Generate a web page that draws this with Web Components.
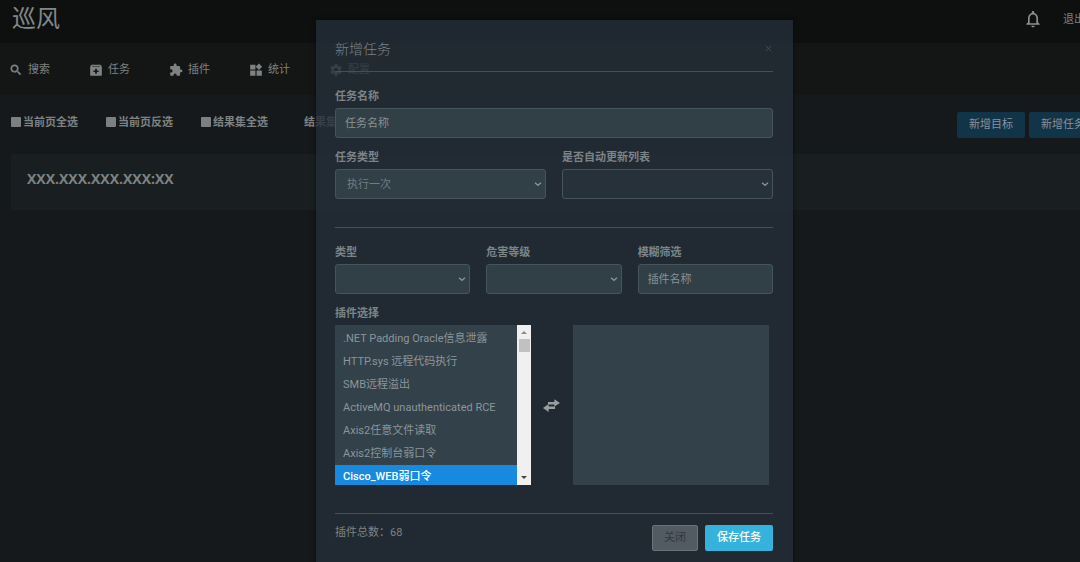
<!DOCTYPE html>
<html lang="zh-CN">
<head>
<meta charset="utf-8">
<title>巡风</title>
<style>
html,body{margin:0;height:100%;overflow:hidden;background:#15191b}
body{font:11px/16px Roboto,"Noto Sans CJK SC",sans-serif;color:#7e8283}
</style>
</head>
<body>
<xf-app></xf-app>
<script>
const icons = {
  search:'<path d="M15.5 14h-.79l-.28-.27A6.47 6.47 0 0 0 16 9.5 6.5 6.5 0 1 0 9.5 16c1.61 0 3.09-.59 4.23-1.57l.27.28v.79l5 4.99L20.49 19zm-6 0C7.01 14 5 11.99 5 9.5S7.01 5 9.5 5 14 7.01 14 9.5 11.99 14 9.5 14z" stroke="currentColor"/>',
  task:'<path fill-rule="evenodd" d="M4 3h16l2 3v14a2 2 0 0 1-2 2H4a2 2 0 0 1-2-2V6zm1 2v1h14V5zm5.500 5v3H7.500v2.500h3v3h3v-3h3V13h-3v-3z"/>',
  plugin:'<path d="M20.500 11H19V7c0-1.100-.9-2-2-2h-4V3.500a2.500 2.500 0 0 0-5 0V5H4c-1.100 0-2 .9-2 2v3.800h1.500a2.700 2.700 0 0 1 0 5.400H2V20c0 1.100.9 2 2 2h3.800v-1.500a2.700 2.700 0 0 1 5.400 0V22H17c1.100 0 2-.9 2-2v-4h1.500a2.500 2.500 0 0 0 0-5z"/>',
  stats:'<path d="M2 3h9v8H2zm0 10h9v9H2zm11 0h9v9h-9zM17 1l5.500 5.500L17 12l-5.500-5.500z"/>',
  gear:'<path d="M19.430 12.980c.04-.32.070-.64.070-.98s-.03-.66-.07-.98l2.110-1.650c.19-.15.240-.42.120-.64l-2-3.460c-.12-.22-.39-.3-.61-.22l-2.490 1c-.52-.4-1.080-.73-1.690-.98l-.38-2.650A.49.490 0 0 0 14 2h-4c-.25 0-.46.180-.49.420l-.38 2.650c-.61.250-1.170.590-1.690.980l-2.490-1c-.23-.09-.49 0-.61.220l-2 3.460c-.13.220-.07.490.120.640l2.110 1.650c-.04.320-.07.650-.07.980s.03.660.070.980l-2.110 1.650c-.19.150-.24.420-.12.640l2 3.460c.12.220.390.3.610.220l2.490-1c.52.4 1.080.730 1.690.980l.38 2.650c.03.240.240.420.490.420h4c.25 0 .46-.18.490-.42l.38-2.650c.61-.25 1.170-.59 1.690-.98l2.490 1c.23.090.490 0 .61-.22l2-3.460c.12-.22.070-.49-.12-.64zM12 15.500a3.500 3.500 0 1 1 0-7 3.500 3.500 0 0 1 0 7z"/>',
  bell:'<path d="M12 22c1.100 0 2-.9 2-2h-4c0 1.100.9 2 2 2zm6-6v-5c0-3.070-1.630-5.640-4.500-6.320V4a1.500 1.500 0 0 0-3 0v.68C7.640 5.360 6 7.920 6 11v5l-2 2v1h16v-1zm-2 1H8v-6c0-2.480 1.510-4.500 4-4.500s4 2.020 4 4.500z"/>',
  swap:'<path d="M16 3l8 5.500-8 5V10.500H7V7h9zM8 10l-8 5.500L8 21v-4h9v-3.500H8z"/>',
  down:'<path d="M3 8l9 8 9-8" fill="none" stroke="currentColor" stroke-width="4"/>',
  close:'<path d="M5 5l14 14M19 5L5 19" fill="none" stroke="currentColor" stroke-width="2"/>'
};

function define(name, html){
  customElements.define(name, class extends HTMLElement{
    constructor(){
      super();
      const t = document.createElement('template');
      t.innerHTML = typeof html === 'function' ? html(this) : html;
      this.attachShadow({mode:'open'}).append(t.content.cloneNode(true));
    }
  });
}

define('xf-icon', el => `<style>
:host{display:block;flex:none;width:14px;height:14px}
svg{display:block;width:100%;height:100%}
</style><svg viewBox="0 0 24 24" fill="currentColor" aria-hidden="true">${icons[el.getAttribute('name')]}</svg>`);

define('xf-topbar', `<style>
:host{display:flex;align-items:center;justify-content:space-between;height:43px;padding:0 24px 0 12px;background:#0d100f;box-sizing:border-box}
.logo{font-size:24px;line-height:28px;color:#858786;margin-bottom:6px}
.right{display:flex;align-items:center;gap:20px;margin-bottom:3px}
xf-icon{width:20px;height:20px;color:#8c8e8e}
button{all:unset;display:block;margin-bottom:2px}
a{color:inherit;text-decoration:none}
</style>
<div class="logo">巡风</div>
<div class="right"><button aria-label="通知"><xf-icon name="bell"></xf-icon></button><a href="#">退出</a></div>`);

define('xf-nav-item', el => `<style>
:host{display:block;width:80px}
a{display:flex;align-items:center;gap:5px;color:inherit;text-decoration:none}
</style><a href="#"><xf-icon name="${el.getAttribute('icon')}"></xf-icon><slot></slot></a>`);

define('xf-nav', `<style>
:host{display:block;background:#141616}
nav{display:flex;align-items:center;height:50px;padding:2px 9px 0}
</style>
<nav>
<xf-nav-item icon="search">搜索</xf-nav-item>
<xf-nav-item icon="task">任务</xf-nav-item>
<xf-nav-item icon="plugin">插件</xf-nav-item>
<xf-nav-item icon="stats">统计</xf-nav-item>
<xf-nav-item icon="gear">配置</xf-nav-item>
</nav>`);

define('xf-check', `<style>
:host{display:block}
label{display:flex;align-items:center;gap:2px}
input{appearance:none;width:10px;height:10px;margin:0 0 2px;background:#7c8080;border-radius:1px}
</style><label><input type="checkbox"><slot></slot></label>`);

define('xf-button', `<style>
:host{display:block}
button{font:inherit;color:var(--fg,#85929b);background:var(--bg,#123449);border:1px solid var(--edge,transparent);border-radius:2px;height:26px;padding:0 11px;display:block;white-space:nowrap}
</style><button type="button"><slot></slot></button>`);

define('xf-results', `<style>
:host{display:block;padding:17px 12px 0 11px}
.tools{display:flex;align-items:center;justify-content:space-between;height:26px}
.checks{display:flex;align-items:center;gap:28px;font-weight:700;margin-bottom:5px}
.checks span{margin-left:8px}
.actions{display:flex;gap:4px}
.card{margin-top:16px;height:56px;padding:16px;box-sizing:border-box;background:#191f21;font:700 14px/18px "Open Sans",sans-serif}
</style>
<div class="tools">
<div class="checks"><xf-check>当前页全选</xf-check><xf-check>当前页反选</xf-check><xf-check>结果集全选</xf-check><span>结果集反选</span></div>
<div class="actions"><xf-button>新增目标</xf-button><xf-button>新增任务</xf-button></div>
</div>
<div class="card">XXX.XXX.XXX.XXX:XX</div>`);

const fieldStyle = `<style>
:host{display:block;flex:1;min-width:0}
label{display:block;font-weight:700;line-height:16px;margin-bottom:3px;color:#7c8488}
.box{position:relative}
input,select{appearance:none;display:block;width:100%;height:30px;box-sizing:border-box;border:1px solid #46555c;border-radius:3px;background:var(--fill,#313f47);color:#7f898e;font:inherit;outline:0}
input{padding:1px 9px 0}
select{padding:1px 11px 0;color:#717c82}
input::placeholder{color:#8a9296;opacity:1}
xf-icon{position:absolute;right:4px;top:11px;width:8px;height:8px;color:#899297;pointer-events:none}
</style>`;
define('xf-text', el => `${fieldStyle}<label for="f">${el.getAttribute('label')}</label><input id="f" placeholder="${el.getAttribute('hint')}">`);
define('xf-select', el => `${fieldStyle}<label for="f">${el.getAttribute('label')}</label><div class="box"><select id="f"><option>${el.getAttribute('value')||''}</option></select><xf-icon name="down"></xf-icon></div>`);

define('xf-listbox', el => `<style>
:host{display:flex;width:196px;height:160px;background:#33414a}
select{appearance:none;flex:1;min-width:0;height:100%;box-sizing:border-box;border:0;border-radius:0;margin:0;padding:2px 0 0;background:transparent;color:#8b959a;font:inherit;overflow:hidden;outline:0;scrollbar-width:none}
option{display:flex;align-items:baseline;box-sizing:border-box;height:23px;min-height:23px;padding:2px 8px 0}
/* zero-width ideograph keeps Latin-only rows on the same baseline */
option::before{content:"一";width:0;visibility:hidden}
option.on{background:#178ae0;color:#fff;font-weight:500}
.bar{display:flex;flex-direction:column;width:14px;background:#f0f0f0;align-items:center}
.up,.dn{width:0;height:0;border:3px solid transparent}
.up{border-bottom-color:#8a8a8a;margin:3px 0 5px}
.dn{border-top-color:#444;margin:auto 0 3px}
.thumb{width:11px;height:13px;background:#c1c1c1}
</style><select multiple aria-label="${el.getAttribute('label')}">${(el.getAttribute('items')||'').split('|').filter(Boolean).map((t,i,a)=>`<option${i===a.length-1?' class="on"':''}>${t}</option>`).join('')}</select>
${el.hasAttribute('items')?'<div class="bar"><div class="up"></div><div class="thumb"></div><div class="dn"></div></div>':''}`);

define('xf-dialog', `<style>
:host{display:block;width:43%;box-sizing:border-box;padding:20px 20px 24px 19px;background:rgba(36,46,56,.8);box-shadow:0 0 4px rgba(0,0,0,.5)}
header{display:flex;align-items:center;justify-content:space-between;height:31px;border-bottom:1px solid #455056}
h2{margin:0 0 14px;font-size:14px;line-height:20px;font-weight:300;color:#7a8287}
header button{all:unset;display:block;margin-bottom:14px}
header xf-icon{width:9px;height:9px;color:#4c565d}
form{display:block;margin:0}
.row{display:flex;gap:16px}
.name{margin-top:17px}
.type{margin-top:12px}
hr{border:0;border-top:1px solid #455056;margin:28px 0 0}
.filter{margin-top:17px}
.pick{font-weight:700;margin:12px 0 3px;color:#7c8488}
.lists{display:flex;align-items:center;justify-content:space-between;padding-right:4px}
.lists xf-icon{width:17px;height:17px;color:#9a9fa2}
footer{display:flex;align-items:flex-start;justify-content:space-between;padding-top:11px}
.btns{display:flex;gap:7px}
.close{--bg:#525a62;--fg:#31383d;--edge:#6a7278}
.save{--bg:#35b3dc;--fg:#fff;font-weight:500}
</style>
<header><h2>新增任务</h2><button aria-label="关闭"><xf-icon name="close"></xf-icon></button></header>
<form>
<div class="row name"><xf-text label="任务名称" hint="任务名称"></xf-text></div>
<div class="row type"><xf-select label="任务类型" value="执行一次"></xf-select><xf-select label="是否自动更新列表" style="--fill:#27313a"></xf-select></div>
<hr>
<div class="row filter"><xf-select label="类型"></xf-select><xf-select label="危害等级"></xf-select><xf-text label="模糊筛选" hint="插件名称"></xf-text></div>
<div class="pick">插件选择</div>
<div class="lists"><xf-listbox label="插件选择" items=".NET Padding Oracle信息泄露|HTTP.sys 远程代码执行|SMB远程溢出|ActiveMQ unauthenticated RCE|Axis2任意文件读取|Axis2控制台弱口令|Cisco_WEB弱口令"></xf-listbox><xf-icon name="swap"></xf-icon><xf-listbox label="已选插件"></xf-listbox></div>
<hr>
<footer><span>插件总数：68</span><div class="btns"><xf-button class="close">关闭</xf-button><xf-button class="save">保存任务</xf-button></div></footer>
</form>`);

define('xf-app', `<style>
:host{display:block;position:relative;width:calc(100% + 29px);min-height:100%}
.overlay{position:absolute;inset:0;display:flex;justify-content:center;align-items:flex-start;padding-top:20px}
</style>
<xf-topbar></xf-topbar><xf-nav></xf-nav><xf-results></xf-results>
<div class="overlay"><xf-dialog role="dialog" aria-label="新增任务"></xf-dialog></div>`);
</script>
</body>
</html>
